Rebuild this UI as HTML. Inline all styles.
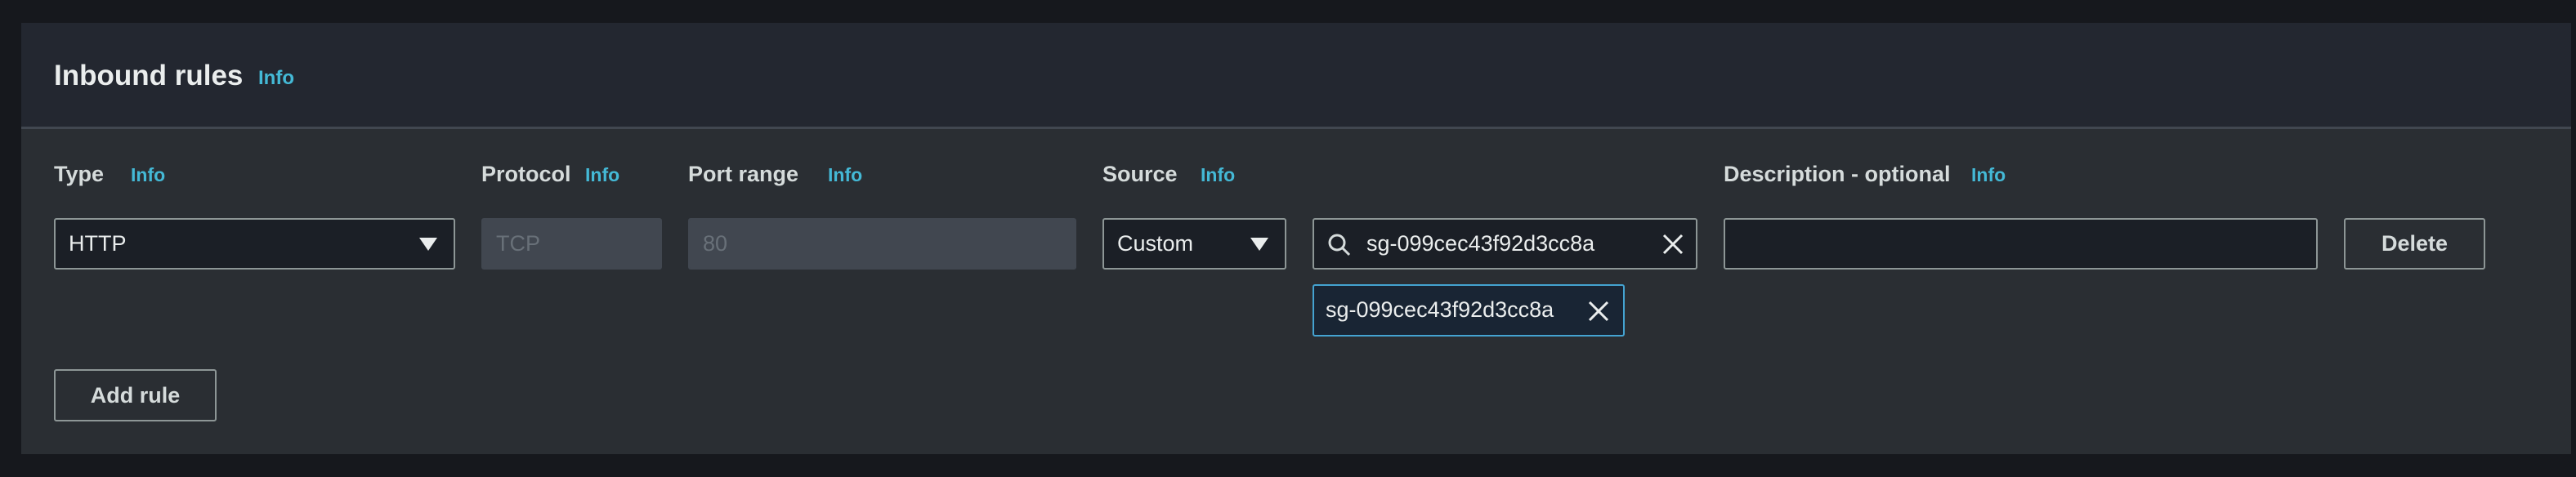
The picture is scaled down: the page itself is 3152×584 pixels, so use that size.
<!DOCTYPE html>
<html><head><style>
body{margin:0;width:3152px;height:584px;background:#16181d;font-family:"Liberation Sans",sans-serif;position:relative;overflow:hidden;color:#eaeded}
.a{position:absolute}
.panel{left:26px;top:28px;width:3120px;height:528px;background:#2a2e33}
.hdr{left:26px;top:28px;width:3120px;height:127px;background:#232730;border-bottom:3px solid #414750}
.lbl{font-size:27px;font-weight:bold;top:198px;color:#d5dbdb}
.info{font-size:23px;font-weight:bold;color:#44b9d6}
.box{box-sizing:border-box;height:63px;top:267px;border:2px solid #8d9696;border-radius:3px;background:#1b1f26;font-size:27px;line-height:59px;padding-left:16px}
.dis{background:#414750;border-color:#414750;color:#687078}
.btn{box-sizing:border-box;border:2px solid #8d9696;border-radius:3px;font-size:27px;font-weight:bold;text-align:center;color:#d5dbdb;background:#2a2e33}
.tri{position:absolute;right:20px;top:22px;width:0;height:0;border-left:11px solid transparent;border-right:11px solid transparent;border-top:16px solid #eaeded}
</style></head><body>
<div class="a panel"></div>
<div class="a hdr"></div>
<div class="a" style="left:66px;top:73px;font-size:35px;font-weight:bold">Inbound rules</div>
<div class="a info" style="left:316px;top:82px;font-size:24px">Info</div>

<div class="a lbl" style="left:66px">Type</div><div class="a info" style="left:160px;top:201px">Info</div>
<div class="a lbl" style="left:589px">Protocol</div><div class="a info" style="left:716px;top:201px">Info</div>
<div class="a lbl" style="left:842px">Port range</div><div class="a info" style="left:1013px;top:201px">Info</div>
<div class="a lbl" style="left:1349px">Source</div><div class="a info" style="left:1469px;top:201px">Info</div>
<div class="a lbl" style="left:2109px">Description - optional</div><div class="a info" style="left:2412px;top:201px">Info</div>

<div class="a box" style="left:66px;width:491px">HTTP<div class="tri"></div></div>
<div class="a box dis" style="left:589px;width:221px">TCP</div>
<div class="a box dis" style="left:842px;width:475px">80</div>
<div class="a box" style="left:1349px;width:225px">Custom<div class="tri"></div></div>
<div class="a box" style="left:1606px;width:471px;padding-left:64px">sg-099cec43f92d3cc8a
 <svg class="a" style="left:16px;top:16px" width="30" height="30" viewBox="0 0 30 30"><circle cx="12" cy="12" r="9" fill="none" stroke="#d5dbdb" stroke-width="3"/><path d="M19 19L27 27" stroke="#d5dbdb" stroke-width="3"/></svg>
 <svg class="a" style="right:14px;top:16px" width="28" height="28" viewBox="0 0 28 28"><path d="M3 3L25 25M25 3L3 25" stroke="#eaeded" stroke-width="3"/></svg>
</div>
<div class="a box" style="left:2109px;width:727px"></div>
<div class="a btn" style="left:2868px;top:267px;width:173px;height:63px;line-height:59px">Delete</div>

<div class="a box" style="left:1606px;top:348px;width:382px;height:64px;border-color:#44a3d1;background:#192534;padding-left:14px">sg-099cec43f92d3cc8a
 <svg class="a" style="right:16px;top:17px" width="28" height="28" viewBox="0 0 28 28"><path d="M3 3L25 25M25 3L3 25" stroke="#eaeded" stroke-width="3"/></svg>
</div>

<div class="a btn" style="left:66px;top:452px;width:199px;height:64px;line-height:60px">Add rule</div>
</body></html>
